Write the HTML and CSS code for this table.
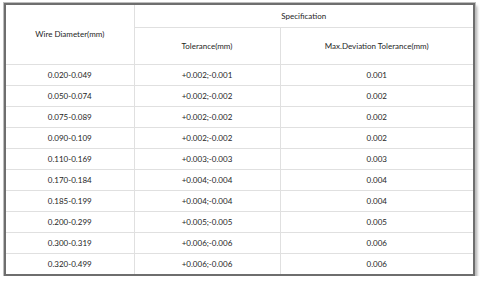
FILE: index.html
```html
<!DOCTYPE html>
<html>
<head>
<meta charset="utf-8">
<link rel="stylesheet" href="styles.css">
</head>
<body>
<div class="frame">
<table class="spec">
<colgroup><col class="c1"><col class="c2"><col class="c3"></colgroup>
<tr class="h1"><th rowspan="2">Wire Diameter(mm)</th><th colspan="2">Specification</th></tr>
<tr class="h2"><th>Tolerance(mm)</th><th>Max.Deviation Tolerance(mm)</th></tr>
<tr><td>0.020-0.049</td><td>+0.002;-0.001</td><td>0.001</td></tr>
<tr><td>0.050-0.074</td><td>+0.002;-0.002</td><td>0.002</td></tr>
<tr><td>0.075-0.089</td><td>+0.002;-0.002</td><td>0.002</td></tr>
<tr><td>0.090-0.109</td><td>+0.002;-0.002</td><td>0.002</td></tr>
<tr><td>0.110-0.169</td><td>+0.003;-0.003</td><td>0.003</td></tr>
<tr><td>0.170-0.184</td><td>+0.004;-0.004</td><td>0.004</td></tr>
<tr><td>0.185-0.199</td><td>+0.004;-0.004</td><td>0.004</td></tr>
<tr><td>0.200-0.299</td><td>+0.005;-0.005</td><td>0.005</td></tr>
<tr><td>0.300-0.319</td><td>+0.006;-0.006</td><td>0.006</td></tr>
<tr class="last"><td>0.320-0.499</td><td>+0.006;-0.006</td><td>0.006</td></tr>
</table>
</div>
</body>
</html>
```
FILE: styles.css
```css
html, body {
  margin: 0;
  padding: 0;
  background: #fff;
}
body {
  padding: 3px 0 0 4px;
  font-family: Lato, "Open Sans", sans-serif;
  color: #1e1e1e;
}
.frame {
  width: 467px;
  height: 269px;
  border: 2px solid #6e6e6e;
  outline: 1px solid #bdbdbd;
  box-shadow: 2px 3px 3px rgba(0,0,0,0.35);
  background: #fff;
  overflow: hidden;
}
.spec {
  width: 100%;
  border-collapse: collapse;
  table-layout: fixed;
  font-size: 8px;
}
.c1 { width: 128px; }
.c2 { width: 146px; }
.spec th, .spec td {
  border: 1px solid #e0e0e0;
  text-align: center;
  padding: 0;
  font-weight: normal;
}
.spec tr:first-child th { border-top: none; }
.spec th:first-child, .spec td:first-child { border-left: none; }
.spec th:last-child, .spec td:last-child { border-right: none; }
.spec .h2 th:first-child { border-left: 1px solid #e0e0e0; }
.spec tr.last td { border-bottom: none; }
.h1 { height: 22px; }
.h2 { height: 37px; }
.spec td { height: 20px; }
```
